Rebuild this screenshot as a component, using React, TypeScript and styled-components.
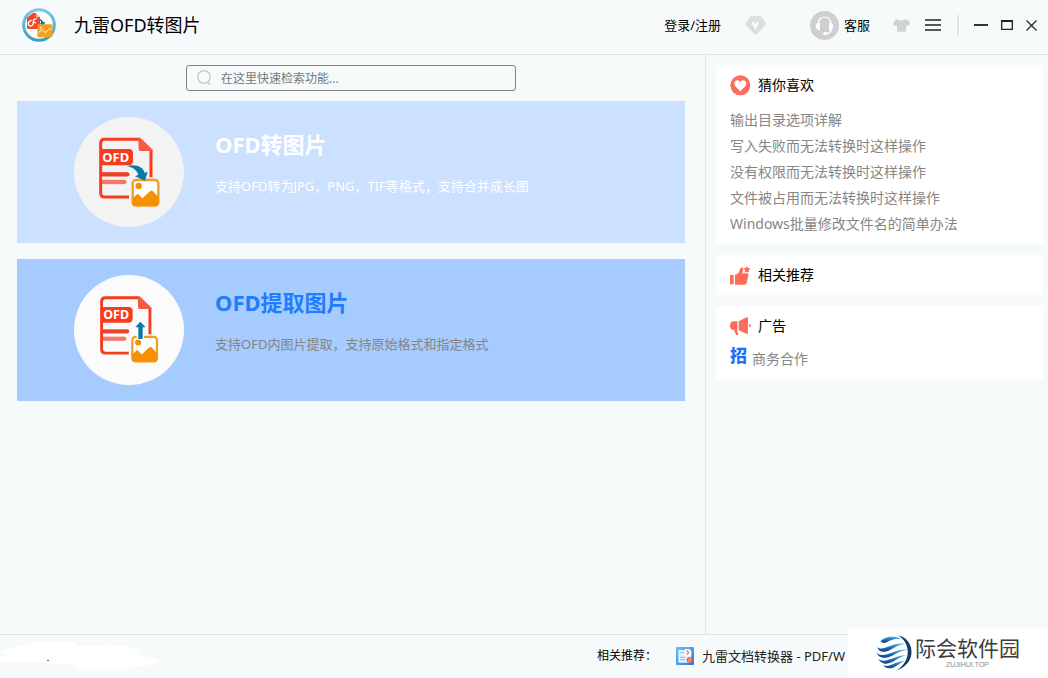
import React from "react";
import styled, { createGlobalStyle } from "styled-components";

const GlobalStyle = createGlobalStyle`
  *, *::before, *::after { box-sizing: border-box; }
  body {
    margin: 0;
    background: #f6fafb;
    color: #000;
    font-family: "Noto Sans", "Noto Sans CJK SC", sans-serif;
    font-size: 13px;
    line-height: 20px;
  }
  button, input { font: inherit; color: inherit; }
  h1, h2, p, ul { margin: 0; padding: 0; font-weight: 400; }
  a { color: inherit; text-decoration: none; }
  svg { display: block; flex: none; }
`;

const Window = styled.div`
  display: flex;
  flex-direction: column;
  min-height: 100vh;
  position: relative;
`;

const Header = styled.header`
  display: flex;
  align-items: center;
  height: 55px;
  padding: 0 11px 4px 22px;
  border-bottom: 1px solid #e0e4e6;
`;

const AppTitle = styled.h1`
  margin-left: 18px;
  font-size: 18px;
  line-height: 24px;
  flex: 1;
`;

const PlainButton = styled.button<{ $gap?: number }>`
  display: flex;
  align-items: center;
  gap: 5px;
  padding: 0;
  margin-left: ${(p) => p.$gap ?? 0}px;
  border: 0;
  background: none;
  white-space: nowrap;
  cursor: pointer;
`;

const Separator = styled.span`
  width: 2px;
  height: 20px;
  margin: 0 15px 0 16px;
  background: #e1e4e5;
`;

const Body = styled.div`
  display: flex;
  flex: 1;
`;

const Main = styled.main`
  flex: 1;
  min-width: 0;
  display: flex;
  flex-direction: column;
  padding: 10px 20px 16px 17px;
`;

const SearchBox = styled.label`
  display: flex;
  align-items: center;
  align-self: center;
  width: 50%;
  max-width: 330px;
  height: 26px;
  margin-bottom: 10px;
  padding-left: 10px;
  gap: 9px;
  border: 1px solid #7e8182;
  border-radius: 3px;
`;

const SearchInput = styled.input`
  flex: 1;
  min-width: 0;
  padding: 2px 0 0;
  border: 0;
  outline: 0;
  background: none;
  font-size: 12px;
  &::placeholder { color: #777; opacity: 1; }
`;

const FeatureList = styled.div`
  display: flex;
  flex-direction: column;
  gap: 16px;
`;

const Feature = styled.button<{ $strong?: boolean }>`
  display: flex;
  align-items: flex-start;
  gap: 31px;
  padding: 16px 16px 16px 57px;
  border: 0;
  text-align: left;
  cursor: pointer;
  background: ${(p) => (p.$strong ? "#a6cbff" : "#cce0ff")};
  color: ${(p) => (p.$strong ? "#858585" : "#fff")};
`;

const FeatureText = styled.span`
  display: flex;
  flex-direction: column;
  gap: 16px;
  padding-top: 11px;
`;

const FeatureName = styled.strong<{ $strong?: boolean }>`
  font-size: 22px;
  line-height: 32px;
  font-weight: 700;
  color: ${(p) => (p.$strong ? "#207dff" : "#fff")};
`;

const Sidebar = styled.aside`
  flex: 0 0 343px;
  display: flex;
  flex-direction: column;
  gap: 11px;
  padding: 10px 5px 10px 10px;
  border-left: 1px solid #e0e4e6;
`;

const Panel = styled.section`
  padding: 0 14px;
  background: #fff;
`;

const PanelTitle = styled.h2`
  display: flex;
  align-items: center;
  gap: 7px;
  height: 40px;
  font-size: 14px;
`;

const LinkList = styled.ul<{ $top?: number }>`
  list-style: none;
  padding: ${(p) => p.$top ?? 0}px 0 7px;
  font-size: 14px;
  line-height: 26px;
  color: #868686;
`;

const PartnerLink = styled.a`
  display: flex;
  gap: 5px;
`;

const PartnerMark = styled.b`
  font-size: 17px;
  line-height: 20px;
  font-weight: 900;
  color: #1f72f5;
`;

const Footer = styled.footer`
  display: flex;
  justify-content: space-between;
  height: 44px;
  border-top: 1px solid #e0e4e6;
  overflow: hidden;
`;

const Promo = styled.div`
  display: flex;
  align-items: center;
  flex: 0 0 451px;
  padding-bottom: 2px;
  white-space: nowrap;
  overflow: hidden;
`;

const PromoLabel = styled.span`
  width: 79px;
  font-size: 12px;
`;

const PromoLink = styled.a`
  display: flex;
  align-items: center;
  gap: 8px;
  color: #222;
`;

const SiteMark = styled.div`
  position: absolute;
  right: 0;
  bottom: 0;
  display: flex;
  align-items: center;
  gap: 2px;
  width: 200px;
  height: 50px;
  padding-left: 28px;
  background: #fff;
`;

const SiteText = styled.div`
  display: flex;
  flex-direction: column;
  align-items: center;
  padding-bottom: 3px;
`;

const SiteName = styled.span`
  font-size: 21px;
  line-height: 26px;
  color: #3c3c3c;
`;

const SiteDomain = styled.span`
  font-family: "Liberation Sans", sans-serif;
  font-size: 7px;
  line-height: 8px;
  color: #8c8c8c;
`;

const BrandIcon = () => (
  <svg width="34" height="34" viewBox="0 0 102 102" aria-hidden="true">
    <defs>
      <linearGradient id="ring" x1="0" y1="0" x2="0" y2="1">
        <stop offset="0" stopColor="#7ccbe2" />
        <stop offset="1" stopColor="#3f9fc6" />
      </linearGradient>
    </defs>
    <circle cx="51" cy="51" r="46" fill="#fff" stroke="url(#ring)" strokeWidth="9" />
    <path d="M15 29L33 15H41L54 28V60Q54 63 50 63H19Q15 63 15 59Z" fill="#f2452f" />
    <path d="M42 15l12 13H42z" fill="#fbb5a9" />
    <path d="M29 37c-13 2-13 18-2 17 7-1 7-8 7-13s2-9 10-8M33 44h9" fill="none" stroke="#fff" strokeWidth="4" />
    <path d="M48 33c10-1 15 4 15 10l6-2-3 12-14-5 5-3c0-6-3-10-9-12z" fill="#10719c" />
    <rect x="46" y="49" width="45" height="39" rx="4" fill="#f7a01b" />
    <path d="M49 74l11-9 10 9 14-13 6 6" fill="none" stroke="#fff" strokeWidth="3" />
    <circle cx="56" cy="59" r="3" fill="#fff" />
  </svg>
);

const VipIcon = () => (
  <svg width="21" height="19" viewBox="0 0 63 57" aria-hidden="true">
    <path d="M17 0H47L63 22Q63 25 60 28L35 55Q32 58 29 55L3 28Q0 25 2 22Z" fill="#dcdfe0" />
    <path d="M23 18l8 17 8-17" fill="none" stroke="#fff" strokeWidth="6" />
  </svg>
);

const HeadsetIcon = () => (
  <svg width="29" height="29" viewBox="0 0 87 87" aria-hidden="true">
    <circle cx="43.500" cy="43.500" r="43.500" fill="#cfcfcf" />
    <path d="M25 38C23 12 64 12 62 38" fill="none" stroke="#fff" strokeWidth="4" />
    <path d="M30 35V58Q17 57 17 46T30 35ZM57 35V58Q70 57 70 46T57 35Z" fill="#fff" />
    <path d="M65 53C64 62 58 67 49 68" fill="none" stroke="#fff" strokeWidth="4" />
    <ellipse cx="46" cy="68" rx="7" ry="5" fill="#fff" />
  </svg>
);

const ShirtIcon = () => (
  <svg width="17" height="13" viewBox="0 0 51 39" aria-hidden="true">
    <path d="M15 1Q25 9 35 1L46 4 51 16 44 21 39 18V35Q39 38 36 38H15Q12 38 12 35V18L7 21 0 16 5 4Z" fill="#d0d2d3" />
  </svg>
);

const MenuIcon = () => (
  <svg width="16" height="12" viewBox="0 0 16 12" aria-hidden="true">
    <path d="M0 1h16M0 6h16M0 11h16" stroke="#222" strokeWidth="1.500" />
  </svg>
);

const MinimizeIcon = () => (
  <svg width="14" height="12" viewBox="0 0 14 12" aria-hidden="true">
    <path d="M0 6h14" stroke="#333" strokeWidth="2" />
  </svg>
);

const MaximizeIcon = () => (
  <svg width="12" height="10" viewBox="0 0 12 10" aria-hidden="true">
    <path d="M.7 1v8.300h10.600V1" fill="none" stroke="#222" strokeWidth="1.300" />
    <path d="M0 1h12" stroke="#222" strokeWidth="2" />
  </svg>
);

const CloseIcon = () => (
  <svg width="11" height="11" viewBox="0 0 11 11" aria-hidden="true">
    <path d="M.5.5l10 10M10.500.5l-10 10" stroke="#222" strokeWidth="1.200" />
  </svg>
);

const SearchIcon = () => (
  <svg width="15" height="16" viewBox="0 0 15 16" aria-hidden="true">
    <circle cx="7" cy="7" r="6.300" fill="none" stroke="#c3c5c6" strokeWidth="1.200" />
    <path d="M11 12.500l2.500 2" stroke="#c3c5c6" strokeWidth="1.300" />
  </svg>
);

const OfdIcon = ({ extract = false }: { extract?: boolean }) => (
  <svg width="110" height="110" viewBox="0 0 330 330" aria-hidden="true">
    <circle cx="165" cy="165" r="165" fill={extract ? "#fbfbfb" : "#f3f3f3"} />
    <g transform={extract ? "translate(6 4) scale(.96)" : undefined}>
      <path d="M196 67H92Q80 67 80 79V228Q80 240 92 240H165M231 100V181" fill="none" stroke="#f93b1d" strokeWidth="9" />
      <path d="M193 62H199L236 98V102H199Q194 102 194 97Z" fill="#f65a43" />
      <path d="M78 96H164Q177 96 177 109V132Q177 145 164 145H78Z" fill="#f93b1d" />
      <text x="85" y="134" fontSize="39" fontWeight="700" fill="#fff" fontFamily="Noto Sans, sans-serif">OFD</text>
      <path d="M84 172H160" stroke="#ef4129" strokeWidth="13" />
      <circle cx="160" cy="172" r="6.500" fill="#ef4129" />
      <path d="M84 195H151" stroke="#f47665" strokeWidth="13" />
      <circle cx="151" cy="195" r="6.500" fill="#f47665" />
      <rect x="176" y="189" width="77" height="77" rx="10" fill="#fff" stroke="#f39c1f" strokeWidth="7" />
      <circle cx="194" cy="207" r="9.500" fill="#f58f04" />
      <path d="M176 244L189 232Q192 230 195 233L205 244 229 222Q232 219 236 222L253 240V265H176Z" fill="#f58f04" />
      {!extract && (
        <path d="M158 148C185 139 209 151 212 168L221 164 213 191 183 178 193 173C188 158 174 150 158 148Z" fill="#0879a5" />
      )}
    </g>
    {extract && (
      <>
        <path d="M188 176h22v16h-22z" fill="#fff" />
        <path d="M193 192V157H184L199 140 215 157H206V192Z" fill="#0879a5" />
      </>
    )}
  </svg>
);

const HeartIcon = () => (
  <svg width="21" height="21" viewBox="0 0 63 63" aria-hidden="true">
    <circle cx="31" cy="31" r="30" fill="#ff6c5c" />
    <path d="M31 49L16 34C6 21 23 9 31 21C39 9 56 21 46 34Z" fill="#fff" />
  </svg>
);

const ThumbIcon = () => (
  <svg width="21" height="21" viewBox="0 0 63 63" aria-hidden="true">
    <path d="M0 30H11V58H0Z" fill="#ff6c5c" />
    <path d="M15 29L25 25 32 9Q38 5 40 12L37 25H50Q57 26 55 33L50 54Q48 59 43 59H15Z" fill="#ff6c5c" />
    <path d="M51 3l3 6 8 2-6 5 1 7-7-3-6 3 1-8-5-5 7-1z" fill="#ff6c5c" />
  </svg>
);

const HornIcon = () => (
  <svg width="21" height="21" viewBox="0 0 63 63" aria-hidden="true">
    <path d="M22 16H13Q0 16 0 29T12 42L18 57H25L22 44Z" fill="#ff6c5c" />
    <path d="M26 16L50 4Q54 3 54 8V50Q54 55 49 53L26 43Z" fill="#ff6c5c" />
    <path d="M57 24Q63 25 63 29T57 34Z" fill="#ff6c5c" />
  </svg>
);

const ConverterIcon = () => (
  <svg width="18" height="18" viewBox="0 0 54 54" aria-hidden="true">
    <defs>
      <linearGradient id="tile" x1="0" y1="0" x2="1" y2="1">
        <stop offset="0" stopColor="#62c6ff" />
        <stop offset="1" stopColor="#2478f2" />
      </linearGradient>
    </defs>
    <rect width="54" height="54" rx="3" fill="url(#tile)" />
    <path d="M7 9H29V26H45V47H7Z" fill="#e3f1ff" />
    <path d="M13 17H23M13 31H28M13 38H28" stroke="#8fc2f7" strokeWidth="4" />
    <path d="M27 6H39L46 12V28H27Z" fill="#fff" />
    <path d="M33 11v11h3q6-5 0-11z" fill="none" stroke="#f36f55" strokeWidth="3" />
    <circle cx="41" cy="39" r="7" fill="#ffd9d0" stroke="#f0593a" strokeWidth="4" />
    <path d="M37 35L45 43" stroke="#f0593a" strokeWidth="4" />
  </svg>
);

const GlobeIcon = () => (
  <svg width="37" height="38" viewBox="0 0 111 114" aria-hidden="true">
    <defs>
      <linearGradient id="globe" x1="0" y1="0" x2="0" y2="1">
        <stop offset="0" stopColor="#55c2ee" />
        <stop offset=".5" stopColor="#2170b8" />
        <stop offset="1" stopColor="#123b78" />
      </linearGradient>
    </defs>
    <path d="M66 4C117 15 124 88 63 108C108 80 103 25 66 4Z" fill="#16396b" />
    <g fill="url(#globe)">
      <path d="M13 22C31 3 57 4 76 15C56 12 42 19 32 25C25 28 18 27 13 22Z" />
      <path d="M4 39C23 55 48 22 87 30C57 33 40 56 20 53C11 52 5 47 4 39Z" />
      <path d="M2 56C24 78 58 42 94 47C62 51 43 75 21 71C10 69 4 63 2 56Z" />
      <path d="M7 75C29 92 59 61 92 64C66 69 49 91 27 89C17 87 10 82 7 75Z" />
      <path d="M20 93C41 103 60 80 86 80C68 87 57 104 39 103C31 102 25 98 20 93Z" />
    </g>
  </svg>
);

const Scribble = () => (
  <svg width="162" height="43" viewBox="0 0 486 129" aria-hidden="true">
    <path
      d="M4 52Q8 40 45 37L80 31Q105 21 140 21H226Q237 27 226 33L285 31Q380 26 390 42L418 43Q424 54 410 60L445 66 482 76Q482 84 464 88L400 96Q380 103 330 102H235Q222 100 229 91L182 86Q150 92 134 88L133 82 36 83 0 79V66L20 61Q4 61 4 52Z"
      fill="#fff"
    />
    <path d="M141 76h6" stroke="#555" strokeWidth="3" />
  </svg>
);

const tips = [
  "输出目录选项详解",
  "写入失败而无法转换时这样操作",
  "没有权限而无法转换时这样操作",
  "文件被占用而无法转换时这样操作",
  "Windows批量修改文件名的简单办法",
];

export default function App() {
  return (
    <Window>
      <GlobalStyle />
      <Header>
        <BrandIcon />
        <AppTitle>九雷OFD转图片</AppTitle>
        <PlainButton>登录/注册</PlainButton>
        <PlainButton $gap={24} aria-label="VIP"><VipIcon /></PlainButton>
        <PlainButton $gap={44}><HeadsetIcon />客服</PlainButton>
        <PlainButton $gap={23} aria-label="换肤"><ShirtIcon /></PlainButton>
        <PlainButton $gap={15} aria-label="菜单"><MenuIcon /></PlainButton>
        <Separator />
        <PlainButton aria-label="最小化"><MinimizeIcon /></PlainButton>
        <PlainButton $gap={13} aria-label="最大化"><MaximizeIcon /></PlainButton>
        <PlainButton $gap={13} aria-label="关闭"><CloseIcon /></PlainButton>
      </Header>
      <Body>
        <Main>
          <SearchBox>
            <SearchIcon />
            <SearchInput type="text" aria-label="检索功能" placeholder="在这里快速检索功能..." />
          </SearchBox>
          <FeatureList>
            <Feature>
              <OfdIcon />
              <FeatureText>
                <FeatureName>OFD转图片</FeatureName>
                <span>支持OFD转为JPG，PNG，TIF等格式，支持合并成长图</span>
              </FeatureText>
            </Feature>
            <Feature $strong>
              <OfdIcon extract />
              <FeatureText>
                <FeatureName $strong>OFD提取图片</FeatureName>
                <span>支持OFD内图片提取，支持原始格式和指定格式</span>
              </FeatureText>
            </Feature>
          </FeatureList>
        </Main>
        <Sidebar>
          <Panel>
            <PanelTitle><HeartIcon />猜你喜欢</PanelTitle>
            <LinkList $top={2}>
              {tips.map((tip) => (
                <li key={tip}><a href="#">{tip}</a></li>
              ))}
            </LinkList>
          </Panel>
          <Panel>
            <PanelTitle><ThumbIcon />相关推荐</PanelTitle>
          </Panel>
          <Panel>
            <PanelTitle><HornIcon />广告</PanelTitle>
            <LinkList>
              <li><PartnerLink href="#"><PartnerMark>招</PartnerMark>商务合作</PartnerLink></li>
            </LinkList>
          </Panel>
        </Sidebar>
      </Body>
      <Footer>
        <Scribble />
        <Promo>
          <PromoLabel>相关推荐：</PromoLabel>
          <PromoLink href="#"><ConverterIcon />九雷文档转换器 - PDF/W</PromoLink>
        </Promo>
      </Footer>
      <SiteMark>
        <GlobeIcon />
        <SiteText>
          <SiteName>际会软件园</SiteName>
          <SiteDomain>ZUJIHUI.TOP</SiteDomain>
        </SiteText>
      </SiteMark>
    </Window>
  );
}
